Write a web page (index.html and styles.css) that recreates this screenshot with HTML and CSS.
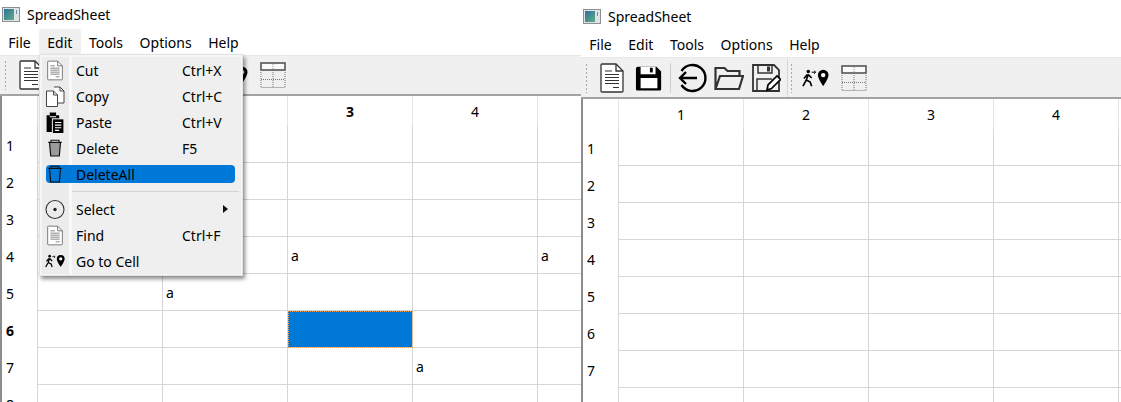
FILE: index.html
```html
<!DOCTYPE html>
<html lang="en">
<head>
    <meta charset="UTF-8">
    <title>SpreadSheet</title>
    <link rel="stylesheet" href="styles.css">
</head>
<body>

<!-- shared icons -->
<svg class="icon-defs" aria-hidden="true">
    <defs>
        <linearGradient id="app-fill" x1="0" y1="0" x2="1" y2="1">
            <stop offset="0" stop-color="#2f6f9c"/>
            <stop offset="1" stop-color="#5fae84"/>
        </linearGradient>
        <symbol id="ic-app" viewBox="0 0 18 15">
            <rect x="0.5" y="0.5" width="17" height="14" fill="#dfe3e6" stroke="#8a8f94"/>
            <rect x="2" y="2" width="10" height="11" fill="url(#app-fill)"/>
            <rect x="14" y="3" width="1" height="4" fill="#6d8fa8"/>
        </symbol>
        <symbol id="ic-doc" viewBox="0 0 30 30">
            <path d="M5 1h14l7 7v20a1 1 0 0 1-1 1H5a1 1 0 0 1-1-1V2a1 1 0 0 1 1-1z" fill="#fff" stroke="currentColor" stroke-width="1.3"/>
            <path d="M19 1v7h7" fill="none" stroke="currentColor" stroke-width="1.3"/>
            <path d="M8 8h7M8 11.500h14M8 14.500h14M8 17.500h14M8 20.500h14M16 24.500h6" stroke="currentColor" stroke-width="1.2"/>
        </symbol>
        <symbol id="ic-floppy" viewBox="0 0 30 30">
            <path d="M3 3h20l5 5v19a1.500 1.500 0 0 1-1.500 1.500h-24A1.500 1.500 0 0 1 1 27V5a2 2 0 0 1 2-2z"/>
            <rect x="6" y="3" width="16" height="8" fill="#fff"/>
            <rect x="16" y="4" width="3" height="5"/>
            <rect x="6" y="15" width="18" height="11" fill="#fff"/>
        </symbol>
        <symbol id="ic-back" viewBox="0 0 30 30">
            <path d="M4.500 8A13 13 0 1 1 4.500 22" fill="none" stroke="#000" stroke-width="2.400"/>
            <path d="M20 15H3M9 9l-6 6 6 6" fill="none" stroke="#000" stroke-width="2.400"/>
        </symbol>
        <symbol id="ic-open" viewBox="0 0 30 30">
            <path d="M1.500 26V5h9l3 3h12v5M1.500 26L6 13h23l-4 13z" fill="none" stroke="#333" stroke-width="2.200"/>
        </symbol>
        <symbol id="ic-saveas" viewBox="0 0 30 30">
            <path d="M2 2h21l5 5v21H2z" fill="none" stroke="#333" stroke-width="1.800"/>
            <path d="M7 2v8h14V2M6 28V16h15" fill="none" stroke="#333" stroke-width="1.500"/>
            <rect x="16" y="3.500" width="3" height="5" fill="#333"/>
            <path d="M16 27l1-5 9-9 3.500 3.500-9 9z" fill="#fff" stroke="#000" stroke-width="1.700"/>
        </symbol>
        <symbol id="ic-walk" viewBox="0 0 28 18">
            <circle cx="6.500" cy="2.200" r="1.800"/>
            <path d="M6.500 5L4.500 11 1 17.500M4.500 11l4 2.200 1.500 4.300M6.500 5.500l3.500 3.500M5.500 5.500L2 9.500" fill="none" stroke="#000" stroke-width="1.700"/>
            <path d="M10 3h4M12.500 1.500l1.700 1.500-1.700 1.500" fill="none" stroke="#000" stroke-width="1"/>
            <path d="M22 .5a5.500 5.500 0 0 0-5.500 5.500c0 4 5.500 11.500 5.500 11.500s5.500-7.500 5.500-11.500A5.500 5.500 0 0 0 22 .5z"/>
            <circle cx="22" cy="6" r="2.300" fill="#fff"/>
        </symbol>
        <symbol id="ic-table" viewBox="0 0 26 26">
            <rect x="1" y="1" width="24" height="7" fill="#fafafa" stroke="#555" stroke-width="1.600"/>
            <path d="M13 2v5" stroke="#999" stroke-dasharray="1 1"/>
            <path d="M1 10v15.500h24V10M1 17.500h24M13 10v15" fill="none" stroke="#777" stroke-dasharray="1 1"/>
        </symbol>
        <symbol id="ic-copy" viewBox="0 0 20 21">
            <path d="M9 1h6l4 4v12h-6" fill="#fff" stroke="#444"/>
            <path d="M15 1v4h4" fill="none" stroke="#444"/>
            <path d="M1.500 5h7l4 4v11.500h-11z" fill="#fff" stroke="#444"/>
            <path d="M8.500 5v4h4" fill="none" stroke="#444"/>
        </symbol>
        <symbol id="ic-paste" viewBox="0 0 18 20">
            <path d="M1 3h3v2h6V3h3v3H6v13H1z"/>
            <rect x="4" y="0.500" width="6" height="3.500"/>
            <rect x="7" y="7" width="10" height="13"/>
            <path d="M9 10h6M9 12.500h6M9 15h6M9 17.500h4" stroke="#fff"/>
        </symbol>
        <symbol id="ic-trash" viewBox="0 0 16 18">
            <path d="M2.500 3.500l1.200 13.500h8.600L13.500 3.500z" fill="currentColor" stroke="#111" stroke-width="1.200"/>
            <path d="M1 3.200h14M4 3V1.200h8V3" fill="none" stroke="#111" stroke-width="1.100"/>
        </symbol>
        <symbol id="ic-radio" viewBox="0 0 20 20">
            <circle cx="10" cy="10" r="9" fill="none" stroke="#333" stroke-width="1.100"/>
            <circle cx="10" cy="10" r="1.700" fill="#222"/>
        </symbol>
    </defs>
</svg>

<div class="window window-left">
    <div class="title-bar">
        <svg class="app-icon"><use href="#ic-app"/></svg>
        <span>SpreadSheet</span>
    </div>
    <div class="menu-bar">
        <span class="menu-title">File</span>
        <span class="menu-title open">Edit</span>
        <span class="menu-title">Tools</span>
        <span class="menu-title">Options</span>
        <span class="menu-title">Help</span>
    </div>
    <div class="toolbar">
        <span class="handle first"></span>
        <span class="tool"><svg class="ic-30 dark"><use href="#ic-doc"/></svg></span>
        <span class="tool"><svg class="ic-28"><use href="#ic-floppy"/></svg></span>
        <span class="tool-sep"></span>
        <span class="tool"><svg class="ic-30"><use href="#ic-back"/></svg></span>
        <span class="tool"><svg class="ic-30"><use href="#ic-open"/></svg></span>
        <span class="tool"><svg class="ic-30"><use href="#ic-saveas"/></svg></span>
        <span class="group-line"></span>
        <span class="handle"></span>
        <span class="tool tool-walk"><svg class="ic-walk"><use href="#ic-walk"/></svg></span>
        <span class="tool"><svg class="ic-26"><use href="#ic-table"/></svg></span>
    </div>
    <div class="table-wrap">
        <table class="sheet">
            <thead>
                <tr><th class="corner"></th><th>1</th><th>2</th><th class="current">3</th><th>4</th><th>5</th></tr>
            </thead>
            <tbody>
                <tr><th>1</th><td></td><td></td><td></td><td></td><td></td></tr>
                <tr><th>2</th><td></td><td></td><td></td><td></td><td></td></tr>
                <tr><th>3</th><td></td><td></td><td></td><td></td><td></td></tr>
                <tr><th>4</th><td></td><td></td><td>a</td><td></td><td>a</td></tr>
                <tr><th>5</th><td></td><td>a</td><td></td><td></td><td></td></tr>
                <tr><th class="current">6</th><td></td><td></td><td class="selected"></td><td></td><td></td></tr>
                <tr><th>7</th><td></td><td></td><td></td><td>a</td><td></td></tr>
                <tr><th>8</th><td></td><td></td><td></td><td></td><td></td></tr>
            </tbody>
        </table>
    </div>

    <!-- Edit menu, open over the toolbar and table -->
    <div class="popup">
        <div class="popup-list">
            <div class="item"><svg class="item-icon grey"><use href="#ic-doc"/></svg><span class="item-label">Cut</span><span>Ctrl+X</span></div>
            <div class="item"><svg class="item-icon"><use href="#ic-copy"/></svg><span class="item-label">Copy</span><span>Ctrl+C</span></div>
            <div class="item"><svg class="item-icon"><use href="#ic-paste"/></svg><span class="item-label">Paste</span><span>Ctrl+V</span></div>
            <div class="item"><svg class="item-icon trash"><use href="#ic-trash"/></svg><span class="item-label">Delete</span><span>F5</span></div>
            <div class="item active"><svg class="item-icon trash trash-empty"><use href="#ic-trash"/></svg><span class="item-label">DeleteAll</span></div>
            <div class="popup-sep"></div>
            <div class="item"><svg class="item-icon"><use href="#ic-radio"/></svg><span class="item-label">Select</span><span class="arrow"></span></div>
            <div class="item"><svg class="item-icon grey"><use href="#ic-doc"/></svg><span class="item-label">Find</span><span>Ctrl+F</span></div>
            <div class="item"><svg class="item-icon walk"><use href="#ic-walk"/></svg><span class="item-label">Go to Cell</span></div>
        </div>
    </div>
</div>

<div class="window window-right">
    <div class="title-bar">
        <svg class="app-icon"><use href="#ic-app"/></svg>
        <span>SpreadSheet</span>
    </div>
    <div class="menu-bar">
        <span class="menu-title">File</span>
        <span class="menu-title">Edit</span>
        <span class="menu-title">Tools</span>
        <span class="menu-title">Options</span>
        <span class="menu-title">Help</span>
    </div>
    <div class="toolbar">
        <span class="handle first"></span>
        <span class="tool"><svg class="ic-30 dark"><use href="#ic-doc"/></svg></span>
        <span class="tool"><svg class="ic-28"><use href="#ic-floppy"/></svg></span>
        <span class="tool-sep"></span>
        <span class="tool"><svg class="ic-30"><use href="#ic-back"/></svg></span>
        <span class="tool"><svg class="ic-30"><use href="#ic-open"/></svg></span>
        <span class="tool"><svg class="ic-30"><use href="#ic-saveas"/></svg></span>
        <span class="group-line"></span>
        <span class="handle"></span>
        <span class="tool tool-walk"><svg class="ic-walk"><use href="#ic-walk"/></svg></span>
        <span class="tool"><svg class="ic-26"><use href="#ic-table"/></svg></span>
    </div>
    <div class="table-wrap">
        <table class="sheet">
            <thead>
                <tr><th class="corner"></th><th>1</th><th>2</th><th>3</th><th>4</th><th>5</th></tr>
            </thead>
            <tbody>
                <tr><th>1</th><td></td><td></td><td></td><td></td><td></td></tr>
                <tr><th>2</th><td></td><td></td><td></td><td></td><td></td></tr>
                <tr><th>3</th><td></td><td></td><td></td><td></td><td></td></tr>
                <tr><th>4</th><td></td><td></td><td></td><td></td><td></td></tr>
                <tr><th>5</th><td></td><td></td><td></td><td></td><td></td></tr>
                <tr><th>6</th><td></td><td></td><td></td><td></td><td></td></tr>
                <tr><th>7</th><td></td><td></td><td></td><td></td><td></td></tr>
                <tr><th>8</th><td></td><td></td><td></td><td></td><td></td></tr>
            </tbody>
        </table>
    </div>
</div>

</body>
</html>
```

FILE: styles.css
```css
html, body {
    height: 100%;
}
body {
    margin: 0;
    display: flex;
    height: 402px;
    overflow: hidden;
    background-color: #ffffff;
    font-family: "Noto Sans", "Open Sans", sans-serif;
    font-size: 14px;
    color: #000000;
}
.icon-defs {
    position: absolute;
    width: 0;
    height: 0;
}

.window {
    position: relative;
    flex: none;
    display: flex;
    flex-direction: column;
    overflow: hidden;
}
.window-left {
    width: 581px;
}
.window-right {
    width: 540px;
    padding-top: 2px;
}

/* Title and menu */
.title-bar {
    display: flex;
    align-items: center;
    height: 29px;
    padding-left: 2px;
    gap: 7px;
}
.app-icon {
    width: 18px;
    height: 15px;
}
.menu-bar {
    display: flex;
    height: 26px;
    align-items: stretch;
}
.menu-title {
    display: flex;
    align-items: center;
    padding: 1px 8.3px 0;
}
.menu-title.open {
    margin-bottom: 1px;
    background-color: #f0f0f0;
    border-radius: 3px;
}

/* Toolbar */
.toolbar {
    display: flex;
    align-items: center;
    height: 38px;
    background-color: #f0f0f0;
    border-bottom: 2px solid #a3a3a3;
    border-top: 1px solid #e8e8e8;
}
.window-right .toolbar {
    height: 39px;
}
.handle {
    width: 3px;
    height: 30px;
    margin-left: 2px;
    background-image: radial-gradient(#a8a8a8 45%, transparent 50%);
    background-size: 3px 4px;
}
.handle.first {
    margin-left: 4px;
    margin-right: 5px;
}
.tool {
    display: flex;
    width: 37px;
    justify-content: center;
    align-items: center;
}
.tool-walk {
    margin-left: 4px;
    margin-right: 1px;
}
.tool-sep {
    width: 1px;
    height: 30px;
    margin: 0 2px 0 3px;
    background-color: #cfcfcf;
}
.group-line {
    width: 1px;
    height: 38px;
    margin-left: 3px;
    background-color: #d8d8d8;
}
.ic-30 {
    width: 30px;
    height: 30px;
}
.ic-28 {
    width: 28px;
    height: 28px;
}
.ic-26 {
    width: 26px;
    height: 26px;
}
.ic-walk {
    width: 27px;
    height: 18px;
}
.dark {
    color: #333333;
}

/* Sheet */
.table-wrap {
    flex: 1;
    overflow: hidden;
    border-left: 2px solid #8c8c8c;
}
.sheet {
    table-layout: fixed;
    width: 661px;
    border-collapse: separate;
    border-spacing: 0;
    font-size: 14px;
}
.sheet th {
    width: 125px;
    padding: 0;
    box-sizing: border-box;
    font-weight: normal;
    border-right: 1px solid #e4e4e4;
}
.sheet thead th {
    height: 30px;
    padding-top: 1px;
}
.window-right .sheet thead th {
    padding-top: 0;
}
.sheet .corner {
    width: 36px;
}
.sheet tbody th {
    width: 36px;
    padding: 2px 0 0 4px;
    text-align: left;
    border-right: 1px solid #d6d6d6;
}
.sheet td {
    height: 37px;
    padding: 0 0 0 3px;
    box-sizing: border-box;
    border-right: 1px solid #d6d6d6;
    border-bottom: 1px solid #d6d6d6;
}
.sheet .current {
    font-weight: bold;
}
.sheet .selected {
    background-color: #0078d7;
    outline: 1px dotted #f0a050;
    outline-offset: -1px;
}

/* Open Edit menu */
.popup {
    position: absolute;
    left: 39px;
    top: 54px;
    width: 204px;
    padding: 2px 1px 1px 2px;
    box-sizing: border-box;
    background-color: #f6f6f6;
    border: 1px solid #e2e2e2;
    box-shadow: 2px 3px 4px rgba(0, 0, 0, 0.45);
}
.popup-list {
    display: flex;
    flex-direction: column;
    background: linear-gradient(to right, #ececec 27px, #f8f8f8 27px, #f8f8f8 30px, #efefef 30px);
}
.item {
    display: flex;
    align-items: center;
    height: 26px;
    margin: 0 6px 0 4px;
}
.item.active {
    height: 18px;
    margin-top: 4px;
    margin-bottom: 5px;
    background-color: #0078d7;
    border-radius: 4px;
}
.item-icon {
    flex: none;
    width: 20px;
    height: 21px;
    margin: 0 11px 0 -1px;
}
.grey {
    color: #6a6a6a;
}
.trash {
    width: 16px;
    height: 18px;
    margin: 0 13px 0 1px;
    color: #9a9a9a;
}
.trash-empty {
    color: transparent;
}
.walk {
    height: 14px;
}
.item-label {
    width: 106px;
}
.popup-sep {
    height: 1px;
    margin: 3px 2px 4px 30px;
    background-color: #d2d2d2;
}
.arrow {
    margin-left: 41px;
    width: 0;
    height: 0;
    border-left: 5px solid #111111;
    border-top: 4px solid transparent;
    border-bottom: 4px solid transparent;
}
```
